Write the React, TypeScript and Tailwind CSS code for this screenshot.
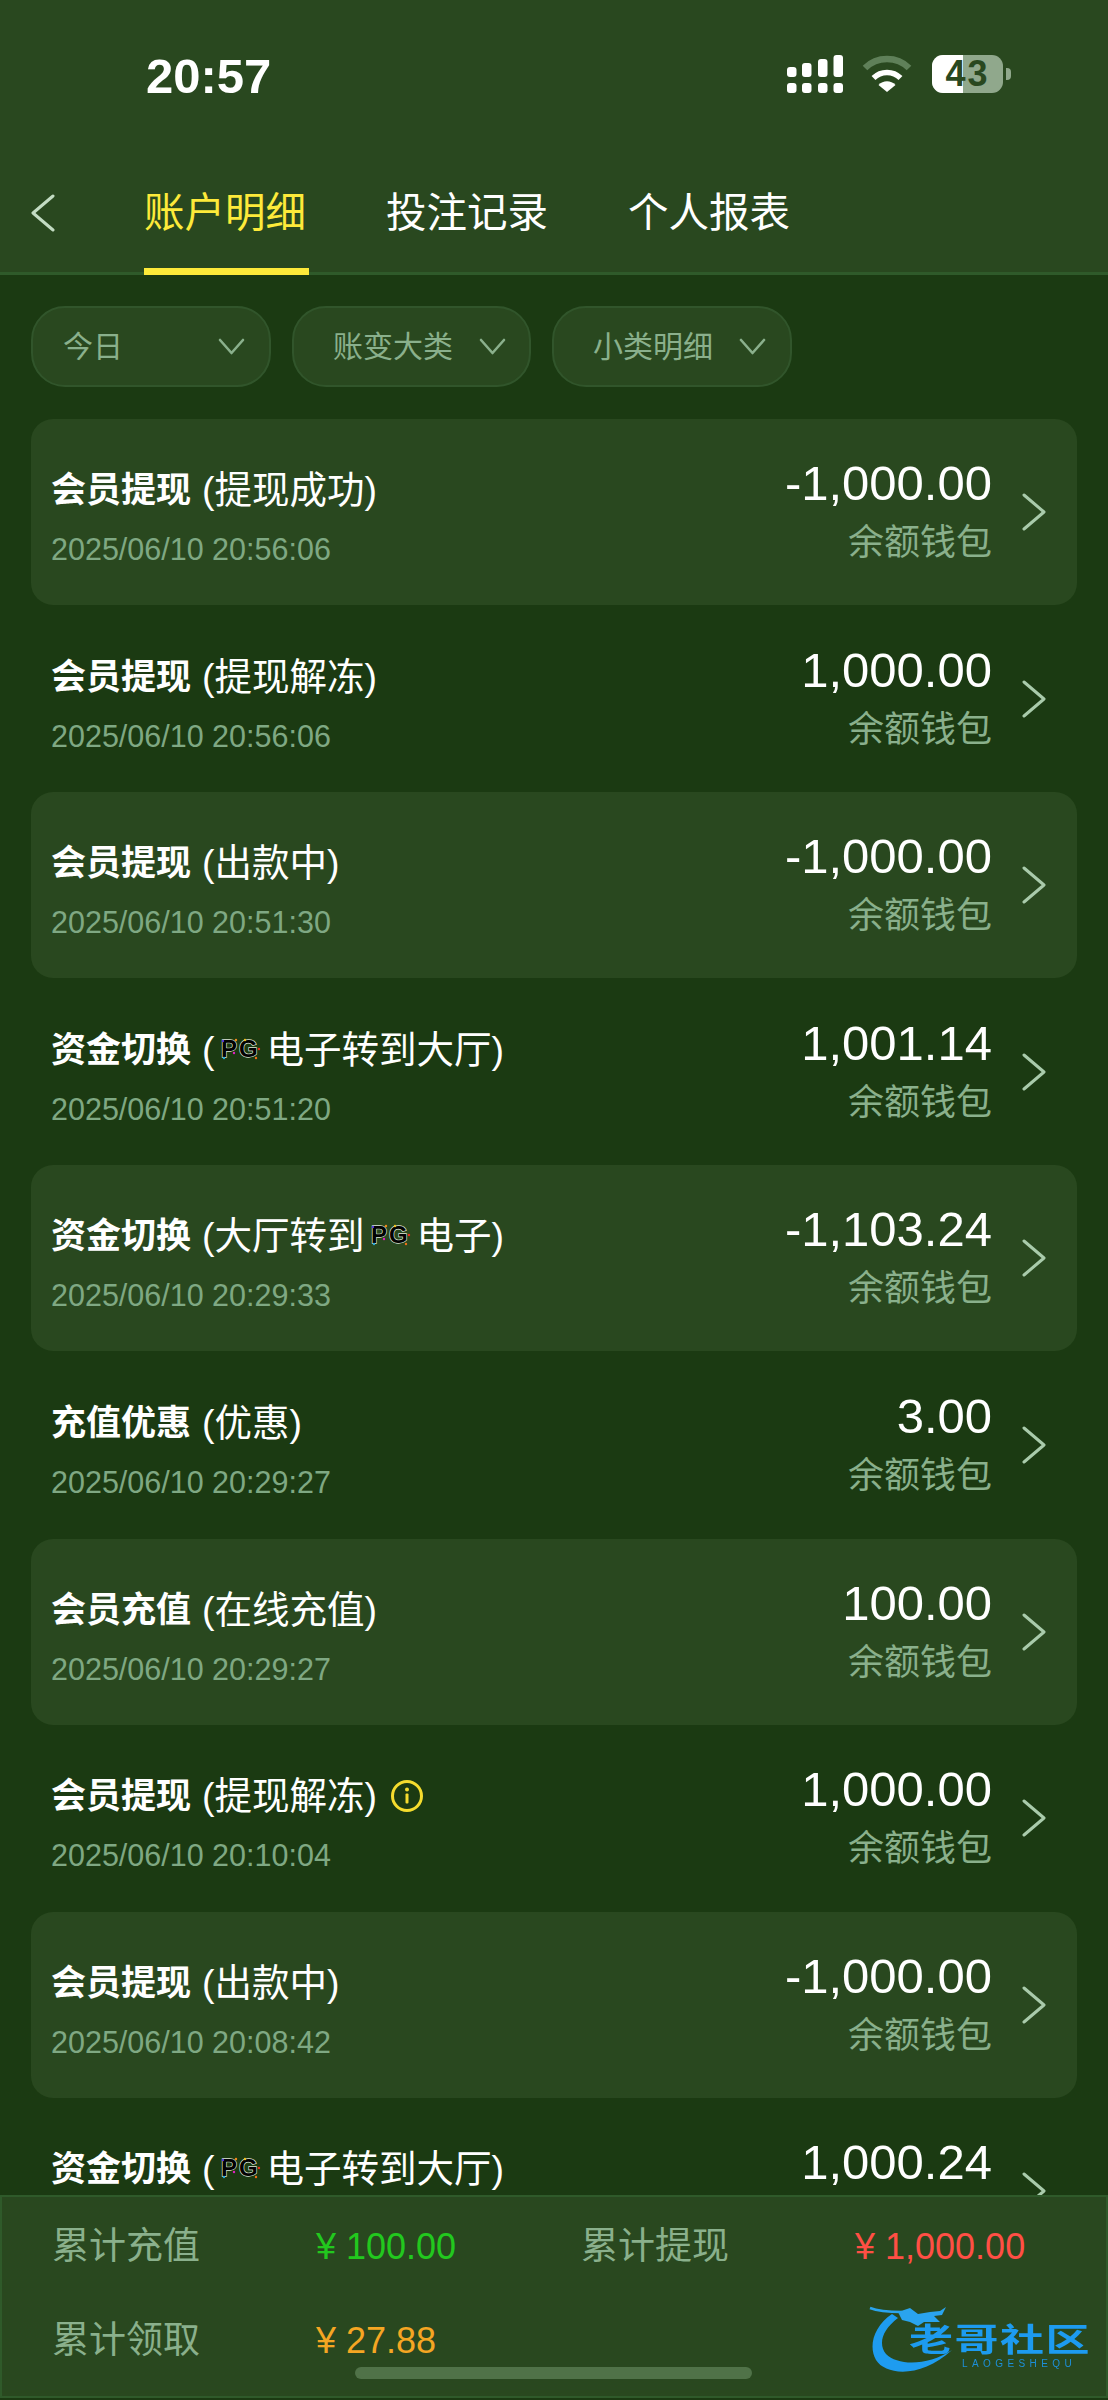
import React from "react";

const FONT = { fontFamily: '"Liberation Sans","Noto Sans CJK SC",sans-serif' };

function Chevron({ className }: { className?: string }) {
  return (
    <svg viewBox="0 0 24 38" className={className} fill="none" stroke="currentColor" strokeWidth="3" strokeLinecap="round" strokeLinejoin="round">
      <path d="M2 2 L22 19 L2 36" />
    </svg>
  );
}

function PG() {
  return (
    <svg width="46" height="28" viewBox="0 0 46 28" className="mx-[3px] inline-block overflow-visible align-middle">
      <text x="3" y="21" fontFamily="Liberation Sans" fontWeight="700" fontSize="24" fill="#020202" stroke="#dfe6da" strokeWidth="1.3" paintOrder="stroke" letterSpacing="2">PG</text>
      <circle cx="5" cy="5" r="1.2" fill="#5a3bd8" />
      <circle cx="18" cy="4" r="1.2" fill="#f08a1c" />
      <circle cx="6" cy="22" r="1.2" fill="#2aa8d8" />
      <circle cx="16" cy="17" r="1.2" fill="#e020c0" />
      <circle cx="27" cy="4" r="1.2" fill="#f0c020" />
      <circle cx="41" cy="13" r="1.2" fill="#e8301c" />
      <circle cx="38" cy="22" r="1.2" fill="#f07018" />
    </svg>
  );
}

function InfoIcon() {
  return (
    <svg width="34" height="34" viewBox="0 0 34 34" fill="none" className="ml-[13px]">
      <circle cx="17" cy="17" r="14.5" stroke="#f5dc2e" strokeWidth="3" />
      <rect x="15.5" y="14.5" width="3" height="10" rx="1" fill="#f5dc2e" />
      <circle cx="17" cy="10.5" r="2" fill="#f5dc2e" />
    </svg>
  );
}

type Row = { a: string; b: React.ReactNode; t?: string; v: string; w?: boolean; info?: boolean };

const rows: Row[] = [
  { a: "会员提现", b: "(提现成功)", t: "2025/06/10 20:56:06", v: "-1,000.00", w: true },
  { a: "会员提现", b: "(提现解冻)", t: "2025/06/10 20:56:06", v: "1,000.00", w: true },
  { a: "会员提现", b: "(出款中)", t: "2025/06/10 20:51:30", v: "-1,000.00", w: true },
  { a: "资金切换", b: <>(<PG />电子转到大厅)</>, t: "2025/06/10 20:51:20", v: "1,001.14", w: true },
  { a: "资金切换", b: <>(大厅转到<PG />电子)</>, t: "2025/06/10 20:29:33", v: "-1,103.24", w: true },
  { a: "充值优惠", b: "(优惠)", t: "2025/06/10 20:29:27", v: "3.00", w: true },
  { a: "会员充值", b: "(在线充值)", t: "2025/06/10 20:29:27", v: "100.00", w: true },
  { a: "会员提现", b: "(提现解冻)", t: "2025/06/10 20:10:04", v: "1,000.00", w: true, info: true },
  { a: "会员提现", b: "(出款中)", t: "2025/06/10 20:08:42", v: "-1,000.00", w: true },
  { a: "资金切换", b: <>(<PG />电子转到大厅)</>, v: "1,000.24" },
];

function StatusIcons() {
  return (
    <div className="flex items-start">
      <svg width="56" height="38" viewBox="0 0 56 38" fill="#fff">
        <rect x="0" y="12" width="9.5" height="10" rx="3" />
        <rect x="15" y="8" width="9.5" height="14" rx="3" />
        <rect x="31" y="4" width="9.5" height="18" rx="3" />
        <rect x="46.5" y="0" width="9.5" height="22" rx="3" />
        <rect x="0" y="28" width="9.5" height="10" rx="3" />
        <rect x="15" y="28" width="9.5" height="10" rx="3" />
        <rect x="31" y="28" width="9.5" height="10" rx="3" />
        <rect x="46.5" y="28" width="9.5" height="10" rx="3" />
      </svg>
      <svg width="50" height="37" viewBox="0 0 50 37" fill="none" className="ml-[19px]">
        <path d="M3 13 C15 1 35 1 47 13" stroke="#5f8059" strokeWidth="6.5" />
        <path d="M11.5 23 C19 15.5 31 15.5 38.5 23" stroke="#fff" strokeWidth="5.5" />
        <path d="M16.5 30 C21 25 29 25 33.5 30 L25 37 Z" fill="#fff" />
      </svg>
      <div className="relative ml-[20px] flex h-[38px] w-[71px] items-center justify-center rounded-[11px] bg-[#90a88c]">
        <div className="absolute bottom-0 left-0 top-0 w-[31px] rounded-l-[11px] bg-white" />
        <span className="relative text-[36px] font-bold leading-none tracking-[2px] text-[#29481f]">43</span>
      </div>
      <div className="ml-[3px] mt-[13px] h-[12px] w-[5px] rounded-r-[4px] bg-[#90a88c]" />
    </div>
  );
}

function Filter({ label, cls }: { label: string; cls: string }) {
  return (
    <div className={`flex h-[81px] items-center justify-between rounded-[34px] border-2 border-[#31552b] bg-[#29481f] text-[30px] text-[#8ab08c] ${cls}`}>
      <span>{label}</span>
      <svg viewBox="0 0 27 17" className="h-[17px] w-[27px]" fill="none" stroke="#8ab08c" strokeWidth="2.6" strokeLinecap="round" strokeLinejoin="round">
        <path d="M2 2 L13.5 15 L25 2" />
      </svg>
    </div>
  );
}

function Stat({ label, value, color }: { label: string; value: string; color: string }) {
  return (
    <>
      <span className="text-[37px] leading-[40px] text-[#8ab08c]">{label}</span>
      <span className={`text-[36px] leading-[40px] ${color}`}>{value}</span>
    </>
  );
}

export default function App() {
  return (
    <div className="relative flex h-[2400px] w-[1108px] flex-col overflow-hidden bg-[#1b3a12]" style={FONT}>
      <header className="box-border flex h-[275px] flex-col border-b-[3px] border-[#2f5a2a] bg-[#29481f]">
        <div className="flex items-start justify-between pl-[146px] pr-[97px] pt-[55px]">
          <span className="text-[49px] font-bold leading-[42px] text-white">20:57</span>
          <StatusIcons />
        </div>
        <div className="mt-[88px] flex items-center pl-[31px]">
          <Chevron className="h-[38px] w-[24px] -scale-x-100 text-[#c3dcc3]" />
          <nav className="ml-[89px] flex gap-[77px] text-[40.5px] leading-[56px] text-white">
            <span className="relative w-[165px] whitespace-nowrap text-[#fdea3a]">
              账户明细
              <span className="absolute left-0 top-[83px] h-[7px] w-[165px] bg-[#fdea3a]" />
            </span>
            <span className="w-[165px] whitespace-nowrap">投注记录</span>
            <span className="w-[160px] whitespace-nowrap">个人报表</span>
          </nav>
        </div>
      </header>

      <div className="mt-[31px] flex gap-[21px] pl-[31px]">
        <Filter label="今日" cls="w-[240px] pl-[30px] pr-[24px]" />
        <Filter label="账变大类" cls="w-[239px] pl-[39px] pr-[23px]" />
        <Filter label="小类明细" cls="w-[240px] pl-[39px] pr-[24px]" />
      </div>

      <div className="mt-[32px] flex flex-col gap-[0.6px] px-[31px]">
        {rows.map((r, i) => (
          <div key={i} className={`flex h-[186px] items-start rounded-[22px] pl-[20px] pr-[31px] ${i % 2 === 0 ? "bg-[#29481f]" : ""}`}>
            <div className="flex-1 pt-[48px]">
              <div className="flex h-[46px] items-center text-[37.5px] leading-[46px] text-white">
                <span className="text-[35px] font-semibold">{r.a}</span>
                <span className="ml-[11px] flex items-center">{r.b}</span>
                {r.info && <InfoIcon />}
              </div>
              {r.t && <div className="mt-[16px] text-[30.5px] leading-[40px] text-[#7fa883]">{r.t}</div>}
            </div>
            <div className="pt-[36px] text-right">
              <div className="text-[49px] leading-[56px] text-white">{r.v}</div>
              {r.w && <div className="mt-[8px] text-[36px] leading-[48px] text-[#8ab08c]">余额钱包</div>}
            </div>
            <Chevron className="ml-[30px] mt-[74px] h-[38px] w-[24px] text-[#a9cbab]" />
          </div>
        ))}
      </div>

      <div className="absolute bottom-[2px] left-0 right-0 h-[203px] border-2 border-[#2f5a2a] bg-[#29481f]">
        <div className="grid grid-cols-[264px_265px_274px_1fr] gap-y-[54px] pl-[50px] pt-[30px]">
          <Stat label="累计充值" value="¥ 100.00" color="text-[#22c81e]" />
          <Stat label="累计提现" value="¥ 1,000.00" color="text-[#ff4f45]" />
          <Stat label="累计领取" value="¥ 27.88" color="text-[#f5a623]" />
        </div>
      </div>

      <div className="absolute bottom-[21px] left-[355px] h-[12px] w-[397px] rounded-full bg-[#507248]" />

      <div className="absolute left-[868px] top-[2302px] h-[76px] w-[226px] blur-[0.6px]">
        <svg width="226" height="76" viewBox="0 0 226 76" className="absolute left-0 top-0">
          <path d="M24 12 C6 24 0 44 8 58 C18 74 54 76 84 48 C60 64 30 64 18 52 C10 42 14 28 30 16 Z" fill="#1e9cf0" />
          <path d="M30 10 L42 6 L50 12 L62 10 L72 9 L78 5 L74 13 L66 14 L72 20 L56 20 L50 24 L42 20 L34 18 Z" fill="#2aa4ee" />
          <path d="M2 6 C12 10 24 10 34 10" stroke="#2aa4ee" strokeWidth="2.5" fill="none" />
        </svg>
        <span className="absolute left-[41px] top-[12px] origin-center scale-y-[0.72] whitespace-nowrap text-[44px] font-bold leading-[52px] tracking-[1.5px] text-[#1d9bf0]">老哥社区</span>
        <span className="absolute left-[94px] top-[56px] whitespace-nowrap text-[10px] leading-[12px] tracking-[4.4px] text-[#1d8fd8]">LAOGESHEQU</span>
      </div>
    </div>
  );
}
